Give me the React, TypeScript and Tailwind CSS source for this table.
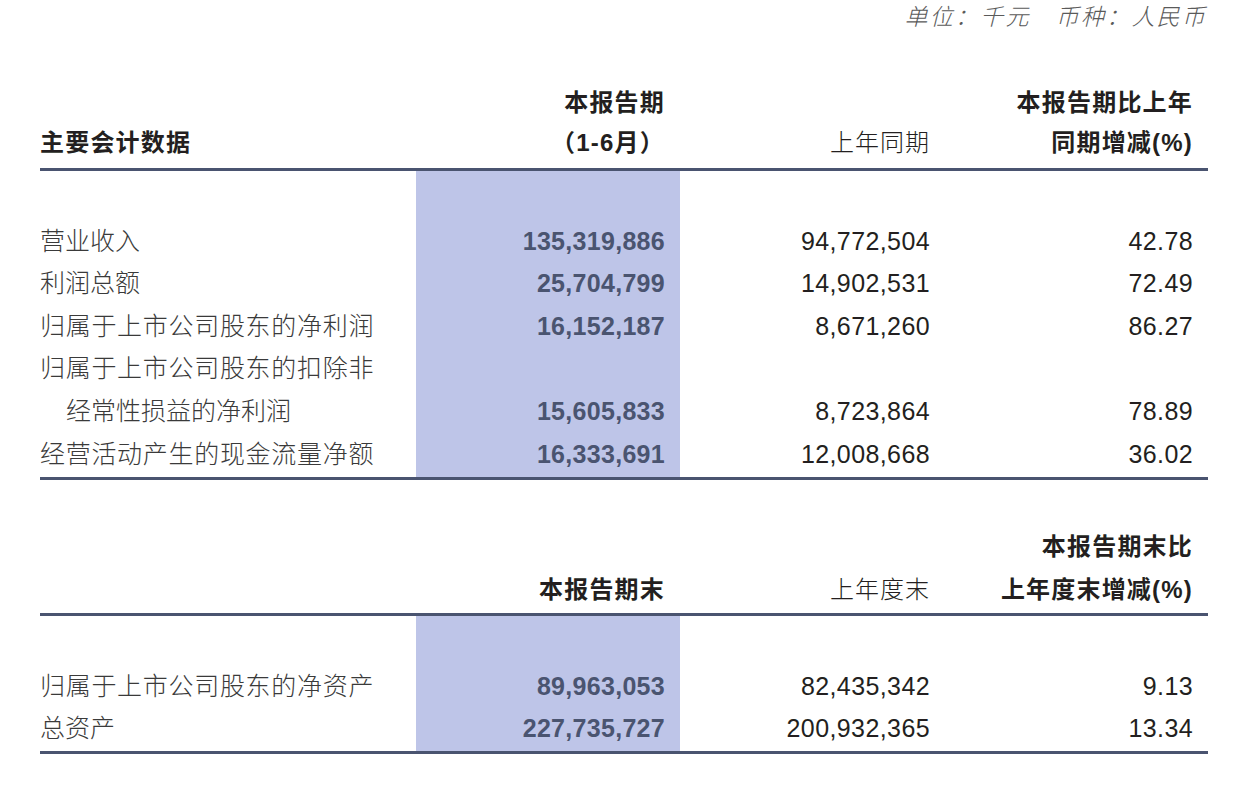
import React from "react";

const FONT = "font-['Liberation_Sans','Noto_Sans_CJK_SC',sans-serif]";
const COLS = "grid grid-cols-[376px_264px_265px_263px]";
const SHADE = "bg-[#bec5e8]";
const LINE = "h-[3px] bg-[#4a5470]";

type Cell = { t: string; cls?: string };

function HeadRow({ cells, h }: { cells: Cell[]; h: string }) {
  return (
    <div className={`${COLS} ${h}`}>
      {cells.map((c, i) => (
        <div
          key={i}
          className={`flex items-center ${i === 0 ? "justify-start" : "justify-end pr-[15px]"} text-[24px] tracking-[1.2px] text-[#231f20] ${c.cls ?? "font-bold"}`}
        >
          {c.t}
        </div>
      ))}
    </div>
  );
}

function BodyRow({
  label,
  v1,
  v2,
  v3,
  labelCls = "",
}: {
  label: string;
  v1: string;
  v2: string;
  v3: string;
  labelCls?: string;
}) {
  return (
    <div className={`${COLS} h-[42.6px]`}>
      <div className={`flex items-center text-[25px] font-light text-[#3a3a3a] whitespace-nowrap ${labelCls}`}>
        {label}
      </div>
      <div className={`${SHADE} flex items-center justify-end pr-[15px] text-[25px] font-bold tracking-[0.3px] text-[#4a5470]`}>
        {v1}
      </div>
      <div className="flex items-center justify-end pr-[15px] text-[25px] tracking-[0.4px] text-[#231f20]">
        {v2}
      </div>
      <div className="flex items-center justify-end pr-[15px] text-[25px] tracking-[0.4px] text-[#231f20]">
        {v3}
      </div>
    </div>
  );
}

function ShadeSpacer({ h }: { h: string }) {
  return (
    <div className={`${COLS} ${h}`}>
      <div />
      <div className={SHADE} />
      <div />
      <div />
    </div>
  );
}

export default function App() {
  const light = "font-light text-[#3a3a3a] tracking-[1px]";
  return (
    <div className={`w-[1240px] h-[788px] bg-white ${FONT}`}>
      <div className="h-[34px] flex items-center justify-end pr-[33px] text-[23px] italic font-light text-[#5a5a5a] tracking-[2.2px]">
        单位：千元　币种：人民币
      </div>

      <div className="ml-[40px] w-[1168px]">
        {/* Table 1 */}
        <div className="mt-[49px]">
          <HeadRow
            h="h-[40px]"
            cells={[{ t: "" }, { t: "本报告期" }, { t: "" }, { t: "本报告期比上年" }]}
          />
          <HeadRow
            h="h-[40px]"
            cells={[
              { t: "主要会计数据" },
              { t: "（1-6月）" },
              { t: "上年同期", cls: light },
              { t: "同期增减(%)" },
            ]}
          />
          <div className="h-[5px]" />
          <div className={LINE} />
          <ShadeSpacer h="h-[49px]" />
          <BodyRow label="营业收入" v1="135,319,886" v2="94,772,504" v3="42.78" />
          <BodyRow label="利润总额" v1="25,704,799" v2="14,902,531" v3="72.49" />
          <BodyRow
            label="归属于上市公司股东的净利润"
            labelCls="tracking-[0.7px]"
            v1="16,152,187"
            v2="8,671,260"
            v3="86.27"
          />
          <BodyRow
            label="归属于上市公司股东的扣除非"
            labelCls="tracking-[0.7px]"
            v1=""
            v2=""
            v3=""
          />
          <BodyRow
            label="经常性损益的净利润"
            labelCls="pl-[26px]"
            v1="15,605,833"
            v2="8,723,864"
            v3="78.89"
          />
          <BodyRow
            label="经营活动产生的现金流量净额"
            labelCls="tracking-[0.7px]"
            v1="16,333,691"
            v2="12,008,668"
            v3="36.02"
          />
          <ShadeSpacer h="h-[1.5px]" />
          <div className={LINE} />
        </div>

        {/* Table 2 */}
        <div className="mt-[45px]">
          <HeadRow
            h="h-[43px]"
            cells={[{ t: "" }, { t: "" }, { t: "" }, { t: "本报告期末比" }]}
          />
          <HeadRow
            h="h-[43px]"
            cells={[
              { t: "" },
              { t: "本报告期末" },
              { t: "上年度末", cls: light },
              { t: "上年度末增减(%)" },
            ]}
          />
          <div className="h-[2px]" />
          <div className={LINE} />
          <ShadeSpacer h="h-[49px]" />
          <BodyRow
            label="归属于上市公司股东的净资产"
            labelCls="tracking-[0.7px]"
            v1="89,963,053"
            v2="82,435,342"
            v3="9.13"
          />
          <BodyRow label="总资产" v1="227,735,727" v2="200,932,365" v3="13.34" />
          <ShadeSpacer h="h-[1px]" />
          <div className={LINE} />
        </div>
      </div>
    </div>
  );
}
